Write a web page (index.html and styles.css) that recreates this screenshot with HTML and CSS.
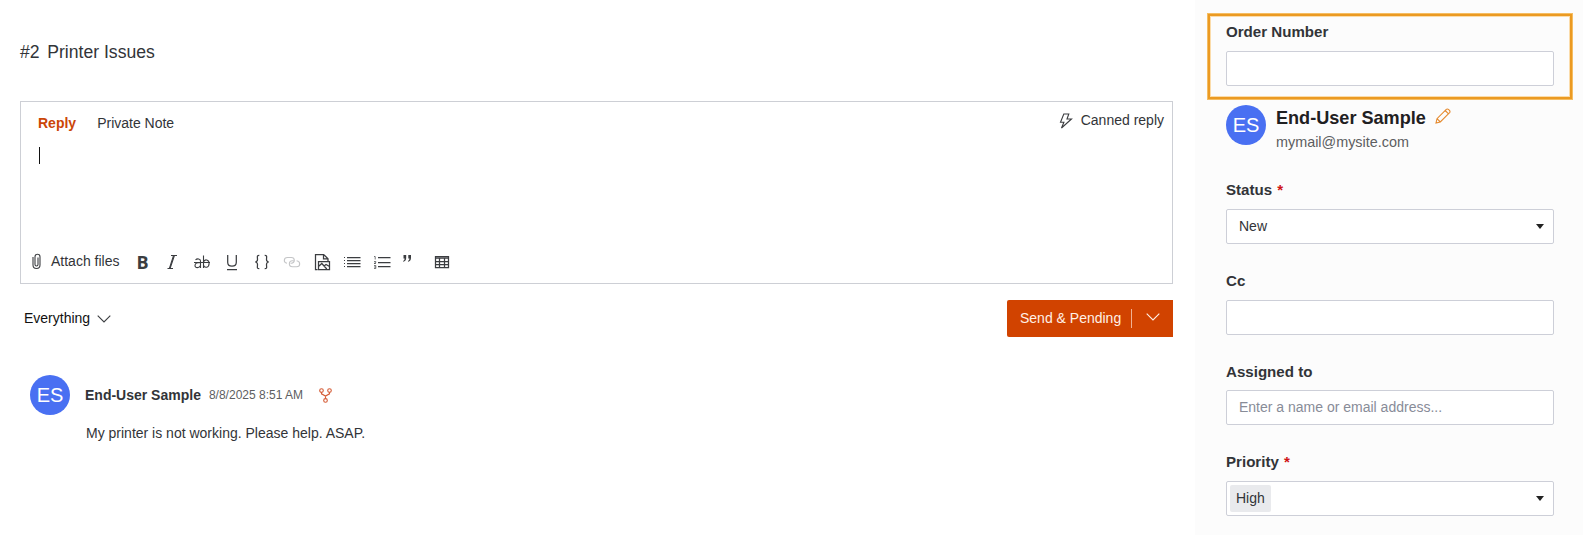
FILE: index.html
```
<!DOCTYPE html>
<html lang="en">
<head>
<meta charset="utf-8">
<title>#2 Printer Issues</title>
<link rel="stylesheet" href="styles.css">
</head>
<body>
<main class="ticket">
  <h1 class="title"><span>#2</span><span>Printer Issues</span></h1>
  <section class="editor">
    <header class="editor-head">
      <nav class="tabs"><span class="tab active">Reply</span><span class="tab">Private Note</span></nav>
      <span class="canned">
        <svg width="14" height="16" viewBox="0 0 14 16"><path d="M4.800 1h5L8 6h4.500L2.500 15l2.400-5.800H1.500z"/></svg>
        <span>Canned reply</span>
      </span>
    </header>
    <div class="editor-body"><span class="caret"></span></div>
    <div class="toolbar">
      <span class="attach">
        <svg width="10" height="17" viewBox="0 0 10 17"><path d="M1 4v8a3.500 3.500 0 0 0 7 0V3.700a2.500 2.500 0 0 0-5 0v7.800a1.500 1.500 0 0 0 3 0V4.500"/></svg>
        <span>Attach files</span>
      </span>
      <b class="tool bold">B</b>
      <svg class="tool" viewBox="0 0 18 18"><path d="M8 2.500h6M4.500 15.500h5.500M11.400 2.500 7 15.500"/><path d="M10.600 2.500 6.400 15.500"/></svg>
      <svg class="tool" viewBox="0 0 18 18"><path d="M1 9.500h16M2.500 7c1.500-1.700 5-1.500 5 1v7M7.500 9.500c-3 0-5.500.7-5.500 2.900 0 3 4.300 2.900 5.500 0M10.500 2.500V15M10.500 9c1-3.200 5.600-2.800 5.600 1.500s-4.600 5-5.600 1.700"/></svg>
      <svg class="tool" viewBox="0 0 18 18"><path class="medium" d="M4.700 2v7.300c0 5.200 8.600 5.200 8.600 0V2M4 16.500h10"/></svg>
      <svg class="tool" viewBox="0 0 18 18"><path class="medium" d="M6.300 2.300C3.500 2.300 4.500 4 4.500 6.500c0 1.700-.4 2.200-2.200 2.500 1.800.3 2.200.8 2.200 2.500 0 2.500-1 4.200 1.800 4.200M11.700 2.300c2.800 0 1.800 1.700 1.800 4.200 0 1.700.4 2.200 2.200 2.500-1.800.3-2.200.8-2.200 2.500 0 2.500 1 4.200-1.800 4.200"/></svg>
      <svg class="tool muted" viewBox="0 0 18 18"><path d="M4 10.200C.2 9.500.5 4.500 4.500 4.500h3.800c4 0 4 5.700 0 5.700H7.500M13.600 7.700c4.200.6 4 6 0 6H9.500c-4.200 0-4.200-6 0-6h1"/></svg>
      <svg class="tool" viewBox="0 0 18 18"><path class="medium" d="M4.500 16.500h-2v-15h8.200l4.300 4.200v3M10.500 1.500v4.300H15M5.500 8.500h11v8h-11zM5.500 13.500l3.300-3 5 5.500M11 13l2-1.500 3.500 2"/></svg>
      <svg class="tool" viewBox="0 0 18 18"><path class="medium" d="M4 4.500h13.500M4 7.500h13.500M4 10.500h13.500M4 13.500h13.500"/><path stroke-dasharray="1 1" d="M1 4.500h2M1 7.500h2M1 10.500h2M1 13.500h2"/></svg>
      <svg class="tool" viewBox="0 0 18 18"><path class="medium" d="M5 4.500h12.500M5 9.500h12.500M5 13.500h12.500"/><path class="fine" d="M1 3.500h1.200v3M1 8.500h1.800v1L1 10.500h2M1 12.500h1.800v3H1M1 14h1.800"/></svg>
      <svg class="tool quote" viewBox="0 0 18 18"><path class="solid" d="M4.500 2h2.700v2.700C7.200 7 6.200 8.300 4.300 8.700l-.2-.8c1.100-.4 1.500-1.200 1.500-2.400H4.500zM9.300 2H12v2.700c0 2.300-1 3.600-2.900 4l-.2-.8c1.100-.4 1.500-1.200 1.500-2.400H9.300z"/></svg>
      <svg class="tool" viewBox="0 0 18 18"><path class="medium" d="M2.500 3.500h13v11h-13zM2.500 5.200h13M2.500 8.500h13M2.500 11.500h13M6.500 5v9.500M11.500 5v9.500"/></svg>
    </div>
  </section>
  <div class="actions">
    <span class="filter"><span>Everything</span><svg width="14" height="8" viewBox="0 0 14 8"><path d="M.7.700 7 7 13.300.7"/></svg></span>
    <span class="send"><span class="send-label">Send &amp; Pending</span><span class="send-more"><svg width="14" height="8" viewBox="0 0 14 8"><path d="M.7.700 7 7 13.300.7"/></svg></span></span>
  </div>
  <article class="message">
    <span class="avatar">ES</span>
    <div>
      <div class="message-head">
        <b class="author">End-User Sample</b><span class="date">8/8/2025 8:51 AM</span>
        <svg class="fork" width="13" height="15" viewBox="0 0 13 15"><circle cx="2.500" cy="2.600" r="1.800"/><circle cx="10.500" cy="2.600" r="1.800"/><circle cx="6.500" cy="12.400" r="1.800"/><path d="M2.500 4.400v1.400l4 2.200 4-2.200V4.400M6.500 8v2.600"/></svg>
      </div>
      <p class="message-text">My printer is not working. Please help. ASAP.</p>
    </div>
  </article>
</main>
<aside class="details">
  <div class="highlight field"><span class="label">Order Number</span><div class="input"></div></div>
  <div class="person">
    <span class="avatar">ES</span>
    <div>
      <div class="person-name">End-User Sample
        <svg width="16" height="16" viewBox="0 0 16 16"><path d="M1 15l1-4.300L11.300 1.400c1.400-1.400 4.700 1.700 3.300 3.200L5.300 14zM2 10.700l3.300 3.300M10.200 2.500l3.300 3.300"/></svg>
      </div>
      <div class="email">mymail@mysite.com</div>
    </div>
  </div>
  <div class="fields">
    <div class="field"><span class="label">Status <i>*</i></span><div class="input"><span>New</span><span class="arrow"></span></div></div>
    <div class="field"><span class="label">Cc</span><div class="input"></div></div>
    <div class="field snug"><span class="label">Assigned to</span><div class="input placeholder">Enter a name or email address...</div></div>
    <div class="field"><span class="label">Priority <i>*</i></span><div class="input tagged"><span class="tag">High</span><span class="arrow"></span></div></div>
  </div>
</aside>
</body>
</html>
```
FILE: styles.css
```
* { box-sizing: border-box; }
body {
  margin: 0;
  height: 535px;
  overflow: hidden;
  display: flex;
  background: #fff;
  color: #323438;
  font: 14px/20px "Liberation Sans", Arial, sans-serif;
}
svg { flex: none; display: block; fill: none; stroke: #3b3d40; stroke-width: 1.100; }
.ticket { width: 1195px; padding: 40px 22px 0 20px; }
.title { display: flex; gap: 7.700px; margin: 0; font-size: 17.600px; font-weight: 400; line-height: 24px; }
.editor { height: 183px; margin-top: 37px; border: 1px solid #cdcfd5; display: flex; flex-direction: column; }
.editor-head { display: flex; justify-content: space-between; padding: 8px 8px 0 17px; }
.tabs { display: flex; gap: 21px; padding-top: 3px; }
.active { color: #cb4608; font-weight: 700; }
.canned { display: flex; gap: 8px; height: 20px; align-items: center; }
.canned svg { margin-top: 1px; }
.editor-body { flex: 1; padding: 14px 0 0 18px; }
.caret { display: block; width: 1px; height: 17px; background: #111; }
.toolbar { height: 42px; display: flex; align-items: center; gap: 12px; padding: 0 0 1px 11px; }
.attach { display: flex; align-items: center; gap: 9px; width: 89px; white-space: nowrap; }
.attach span { padding-bottom: 1px; }
.tool { width: 18px; height: 18px; }
.quote { margin: 0 4px 0 -4px; }
.bold { font: 700 18px/18px "Open Sans", "Noto Sans", sans-serif; text-align: center; color: #3b3d40; padding-left: 1px; }
.medium { stroke-width: 1.250; }
.fine { stroke-width: .7; }
.solid { fill: #3b3d40; stroke: none; }
.muted { stroke: #c4c5c7; }
.actions { display: flex; justify-content: space-between; align-items: center; height: 37px; margin-top: 16px; }
.filter { display: flex; align-items: center; gap: 7px; padding-left: 4px; color: #111; }
.filter span, .send-label { padding-bottom: 2px; }
.send { display: flex; align-items: center; height: 37px; width: 166px; padding-left: 13px; border-radius: 2px 0 0 2px; background: #d14300; color: #fff0e6; }
.send-label { width: 111px; white-space: nowrap; }
.send-more { height: 19px; border-left: 1px solid #f0b294; padding: 4px 0 0 14px; }
.send svg { stroke: #fff0e6; }
.avatar { flex: none; width: 40px; height: 40px; border-radius: 50%; background: #4970f2; color: #fff; font-size: 20px; line-height: 40px; text-align: center; }
.message { display: flex; gap: 15px; margin-top: 38px; padding-left: 10px; }
.message-head { display: flex; align-items: center; height: 40px; }
.date { margin-left: 8px; color: #5d5e61; font-size: 12px; }
.fork { margin-left: 16px; stroke: #d45b35; }
.message-text { margin: 8px 0 0 1px; }
.details { width: 388px; padding-top: 13px; background: #fcfcfc; }
.highlight { width: 366px; height: 87px; margin-left: 12px; padding: 8px 18px 0; border: 1px solid #f5bd62; outline: 2px solid #eb9a22; outline-offset: -3px; box-shadow: inset 0 0 0 3px #fbdcaa; }
.field { display: flex; flex-direction: column; gap: 9px; }
.label { font-size: 15.100px; font-weight: 700; line-height: 20px; }
.label i { margin-left: 1px; color: #cf1515; font-style: normal; }
.snug .label { margin: 1px 0 -1px; }
.input { width: 328px; height: 35px; border: 1px solid #cdcfd8; border-radius: 2px; background: #fff; display: flex; align-items: center; justify-content: space-between; padding: 0 9px 1px 12px; }
.placeholder { color: #888c98; }
.tagged { padding: 0 9px 0 3px; }
.tag { height: 27px; padding: 0 6px; border-radius: 2px; background: #e9eaed; line-height: 27px; }
.arrow { border: solid transparent; border-width: 5px 4px 0; border-top-color: #222; }
.person { display: flex; gap: 10px; margin: 5px 0 0 31px; }
.person-name { display: flex; gap: 9px; color: #1f2022; font-size: 18.100px; font-weight: 700; line-height: 26px; }
.person-name svg { margin-top: 3px; stroke: #e58a2e; }
.email { line-height: 22px; font-size: 14.400px; color: #5d5e61; }
.fields { margin: 27px 0 0 31px; display: flex; flex-direction: column; gap: 26.700px; }
```
